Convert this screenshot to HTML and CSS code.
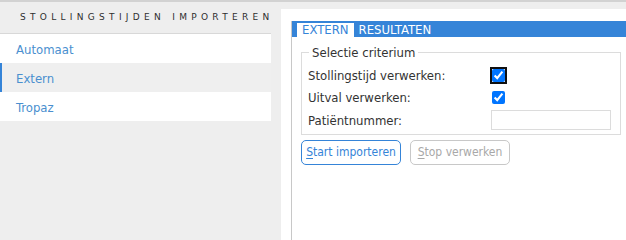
FILE: index.html
```html
<!DOCTYPE html>
<html>
<head>
<meta charset="utf-8">
<link rel="stylesheet" href="styles.css">
</head>
<body>
<div class="app">
  <aside class="sidebar">
    <div class="side-title">STOLLINGSTIJDEN IMPORTEREN</div>
    <nav class="nav">
      <a class="nav-item">Automaat</a>
      <a class="nav-item active">Extern</a>
      <a class="nav-item">Tropaz</a>
    </nav>
  </aside>
  <main class="main">
    <div class="tabs">
      <div class="tabbar">
        <span class="tab active">EXTERN</span>
        <span class="tab">RESULTATEN</span>
      </div>
      <div class="tab-body">
        <fieldset class="criteria">
          <legend>Selectie criterium</legend>
          <div class="row">
            <label class="lbl">Stollingstijd verwerken:</label>
            <span class="ctrl"><input type="checkbox" class="chk focused" checked></span>
          </div>
          <div class="row">
            <label class="lbl">Uitval verwerken:</label>
            <span class="ctrl"><input type="checkbox" class="chk" checked></span>
          </div>
          <div class="row">
            <label class="lbl">Patiëntnummer:</label>
            <span class="ctrl"><input type="text" class="txt"></span>
          </div>
        </fieldset>
        <div class="buttons">
          <button class="btn primary"><u>S</u>tart importeren</button>
          <button class="btn disabled"><u>S</u>top verwerken</button>
        </div>
      </div>
    </div>
  </main>
</div>
</body>
</html>
```
FILE: styles.css
```css
html, body {
  margin: 0;
  padding: 0;
}
body {
  background: #eeeeee;
  font-family: "DejaVu Sans Condensed", "DejaVu Sans", sans-serif;
  font-size: 13px;
  color: #333;
  border-top: 2px solid #d2d2d2;
}
.app {
  display: flex;
  min-height: calc(100vh - 2px);
}
.sidebar {
  width: 271px;
  flex: none;
}
.side-title {
  height: 31px;
  box-sizing: border-box;
  padding: 10px 0 0 20px;
  font-family: "DejaVu Sans", sans-serif;
  font-size: 9px;
  letter-spacing: 4.3px;
  color: #2e2e2e;
  white-space: nowrap;
}
.nav {
  border-top: 1px solid #d8d8d8;
  display: flex;
  flex-direction: column;
}
.nav-item {
  display: block;
  height: 29px;
  line-height: 31px;
  padding-left: 16px;
  background: #fff;
  color: #4a8fcf;
}
.nav-item.active {
  background: #efefef;
  box-shadow: inset 2px 0 0 #3584d8;
}
.main {
  flex: 1;
  margin: 7px 0 0 10px;
  background: #fff;
  padding: 12px 0 0 10px;
}
.tabs {
  border-left: 1px solid #c8c8c8;
  height: 100%;
}
.tabbar {
  background: #3584d8;
  height: 16px;
  box-sizing: border-box;
  padding: 2px 0 0 5px;
  display: flex;
}
.tab {
  height: 14px;
  line-height: 14px;
  padding: 0 5px;
  color: #fff;
}
.tab.active {
  background: #fff;
  color: #3584d8;
}
.tab-body {
  padding: 8px 5px 0 9px;
}
.criteria {
  margin: 0;
  border: 1px solid #dcdcdc;
  padding: 4px 6px 2px 6px;
}
.criteria legend {
  padding: 0 3px;
  margin-left: 1px;
  color: #333;
}
.row {
  display: flex;
  align-items: center;
  height: 22.5px;
}
.lbl {
  width: 183px;
  flex: none;
}
.ctrl {
  display: flex;
  align-items: center;
}
.chk {
  margin: 0 0 0 1px;
  width: 13px;
  height: 13px;
  accent-color: #0075ff;
}
.chk.focused {
  outline: 2px solid #101010;
  outline-offset: 0;
  border-radius: 3px;
}
.txt {
  margin: 0;
  width: 120px;
  height: 20px;
  box-sizing: border-box;
  border: 1px solid #dcdcdc;
  padding: 0 4px;
  font: inherit;
}
.buttons {
  display: flex;
  gap: 9px;
  margin-top: 5px;
}
.btn {
  font-family: "DejaVu Sans Condensed", "DejaVu Sans", sans-serif;
  font-size: 12px;
  height: 25px;
  width: 100px;
  padding: 0;
  white-space: nowrap;
  background: #fff;
  border-radius: 5px;
  cursor: pointer;
}
.btn u {
  text-decoration-thickness: 1px;
  text-underline-offset: 2px;
}
.btn.primary {
  color: #3584d8;
  border: 1px solid #3584d8;
}
.btn.disabled {
  color: #a8a8a8;
  border: 1px solid #c8c8c8;
}
```
